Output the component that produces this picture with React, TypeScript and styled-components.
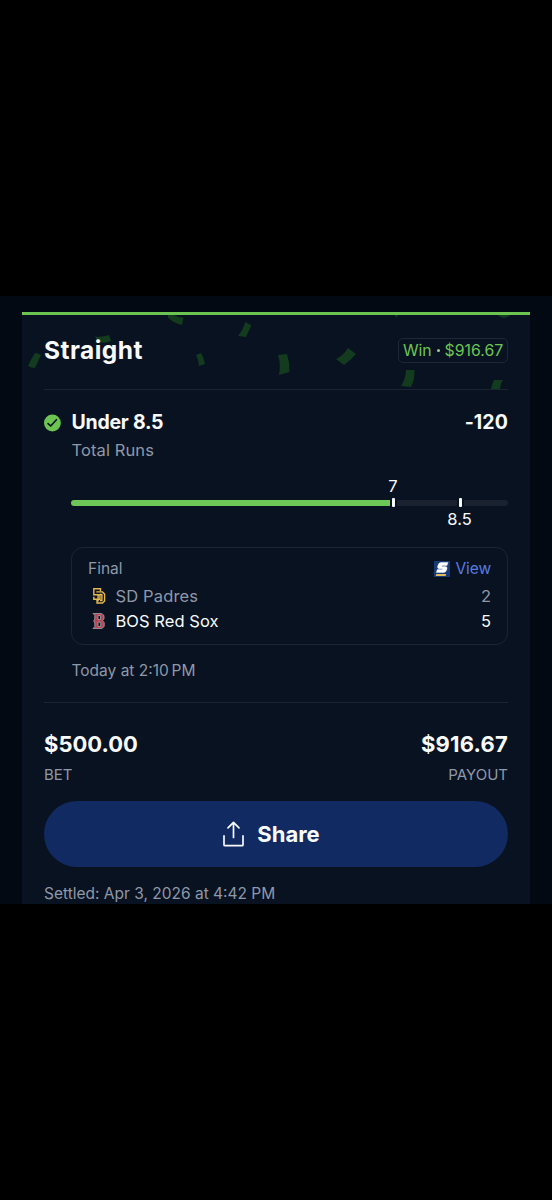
import React from "react";
import styled, { createGlobalStyle } from "styled-components";

const GlobalStyle = createGlobalStyle`
  * { box-sizing: border-box; }
  body {
    margin: 0;
    background: #000;
    color: #f8fafe;
    font-family: Inter, "Liberation Sans", sans-serif;
  }
`;

const Page = styled.main`
  min-height: 1200px;
  padding-top: 296px;
  background: #000;
`;

const Sheet = styled.div`
  height: 608px;
  padding: 16px 22px 0;
  background: #020913;
  overflow: hidden;
`;

const Card = styled.article`
  position: relative;
  height: 592px;
  padding: 0 22px;
  border-top: 3px solid #6cc551;
  background: #091221;
`;

const ConfettiLayer = styled.svg`
  position: absolute;
  top: 0;
  left: 0;
`;

const Header = styled.header`
  position: relative;
  display: flex;
  justify-content: space-between;
  align-items: center;
  height: 75px;
  padding-bottom: 3px;
  border-bottom: 1px solid #1b2432;
`;

const Text = styled.span<{
  $size: number;
  $line: number;
  $weight?: number;
  $color?: string;
  $spacing?: number;
}>`
  display: block;
  margin: 0;
  font-size: ${(p) => p.$size}px;
  line-height: ${(p) => p.$line}px;
  font-weight: ${(p) => p.$weight ?? 400};
  color: ${(p) => p.$color ?? "#f8fafe"};
  letter-spacing: ${(p) => p.$spacing ?? 0}px;
  white-space: nowrap;
`;

const Title = styled(Text)`
  padding-bottom: 2px;
`;

const Badge = styled.div`
  display: flex;
  align-items: center;
  justify-content: center;
  gap: 5px;
  width: 110px;
  height: 25px;
  border: 1px solid #1e2737;
  border-radius: 5px;
`;

const Dot = styled.i`
  width: 3px;
  height: 3px;
  border-radius: 50%;
  background: #a5c8a5;
`;

const Leg = styled.section`
  display: grid;
  grid-template-columns: 27.5px minmax(0, 1fr);
  height: 313px;
  padding-top: 18px;
  border-bottom: 1px solid #1b2432;
`;

const StatusIcon = styled.svg`
  margin-top: 6px;
`;

const Spread = styled.div`
  display: flex;
  justify-content: space-between;
  align-items: center;
`;

const Tracker = styled.div`
  margin: 12px 0 0 -0.5px;
`;

const TrackLabel = styled.div<{ $center: number }>`
  display: flex;
  justify-content: center;
  width: ${(p) => p.$center * 2}px;
`;

const TargetLabel = styled.div`
  display: flex;
  justify-content: center;
  width: 97px;
  margin-left: auto;
`;

const Track = styled.div`
  display: flex;
  align-items: center;
  height: 9px;
  margin: 3px 0 1px;
`;

const Segment = styled.div<{ $width?: number; $fill?: boolean; $radius: string }>`
  width: ${(p) => (p.$width ? `${p.$width}px` : "auto")};
  flex: ${(p) => (p.$width ? "none" : "1")};
  height: 6px;
  background: ${(p) => (p.$fill ? "#6cc756" : "#1a2230")};
  border-radius: ${(p) => p.$radius};
`;

const Tick = styled.div`
  width: 3px;
  height: 9px;
  margin: 0 2px;
  border-radius: 1px;
  background: #f8fafe;
`;

const GameBox = styled.div`
  height: 98px;
  margin: 17px 0 14px -0.5px;
  padding: 9px 16px 0;
  border: 1px solid #1b2432;
  border-radius: 12px;
`;

const ViewLink = styled.a`
  display: flex;
  align-items: center;
  gap: 6px;
`;

const Team = styled.div`
  display: flex;
  align-items: center;
  gap: 8px;
  padding-left: 2.5px;
`;

const TeamRow = styled(Spread)<{ $gap?: number }>`
  height: 25px;
  margin-top: ${(p) => p.$gap ?? 0}px;
`;

const Totals = styled.section`
  padding-top: 26px;
`;

const ShareButton = styled.button`
  display: flex;
  align-items: center;
  justify-content: center;
  gap: 13px;
  width: 100%;
  height: 66px;
  margin: 11px 0 15px;
  padding: 0 9px 0 0;
  border: 0;
  border-radius: 33px;
  background: #112b62;
  font-family: inherit;
`;

const muted = "#8f98a8";
const green = "#6cc551";

const Confetti = () => (
  <ConfettiLayer width="508" height="74" viewBox="22 315 508 74" fill="#133b1e" aria-hidden="true">
    <path d="M168 315H174Q178 317.500 183.500 317.500L182 325Q173 323 168 317.500Z" />
    <path d="M95 336.500Q102 337.500 109 335L111 341Q105 344 98 342Z" />
    <path d="M35 353Q38 353 41 355L35 368Q31 368 28 366Q31 359 35 353Z" />
    <path d="M196 355L201 353Q204 358 205 364L199 366Q199 360 196 355Z" />
    <path d="M245.500 322L251.500 325.500Q248 332 246 337L238 336Q243 330 245.500 322Z" />
    <path d="M278 355L287 354Q290 363 289.500 372L279 375Q281 364 278 355Z" />
    <path d="M348 348L356 354Q350 361 344 365L336 359Q343 356 348 348Z" />
    <path d="M406 370H414.500Q415 379 411 387L401 386Q406 378 406 370Z" />
    <path d="M494 380H503Q500 384 500 389H491Q492 384 494 380Z" />
    <path d="M498 315H510Q504 321 498 315ZM395 315H398L396 318Z" />
  </ConfettiLayer>
);

const Check = () => (
  <StatusIcon width="17" height="18" viewBox="0 0 17 18" aria-hidden="true">
    <circle cx="8.400" cy="9" r="8.400" fill={green} />
    <path d="M4.100 9.600L6.700 12L12.400 5.700" fill="none" stroke="#0a1522" strokeWidth="1.700" strokeLinecap="round" strokeLinejoin="round" />
  </StatusIcon>
);

const PadresLogo = () => (
  <svg width="17" height="18" viewBox="0 0 17 18" fill="none" stroke="#e5b84c" strokeWidth="1.400" aria-hidden="true">
    <path d="M9.500 4.300V1.700H2.800V7.800H9V12.200H2.800V9.800" />
    <path d="M5.300 4.900H11.500L13.600 7V14L11.500 16H6V13.700H7.100V8" />
    <path d="M9 7.500H10.900V13.500H9" />
  </svg>
);

const RedSoxLogo = () => (
  <svg width="17" height="18" viewBox="0 0 17 18" aria-hidden="true">
    <path
      d="M2 1.500H10.500L13 3.500V7L11.500 8.700L13.200 10.500V14.400L10.800 16.500H2L3.800 14.700V11L2.700 9L3.800 7V3.300ZM7 3.500V7.500H9.500V3.500ZM7 10.200V14.500H9.700V10.200Z"
      fill="#b9434e" fillRule="evenodd" stroke="#a6a5ad" strokeWidth=".8"
    />
  </svg>
);

const ScoreLogo = () => (
  <svg width="16" height="16" viewBox="0 0 16 16" aria-hidden="true">
    <rect width="16" height="16" fill="#173b78" />
    <path d="M14 1.500L13 4.500H8L7.600 5.400H11.500Q13.500 5.500 13 7.800Q12.300 11.300 9.800 11.500H2.300L3.300 8.600H8.300L8.600 7.700H5Q3.200 7.500 3.600 5.300Q4.400 1.600 7.100 1.500Z" fill="#fff" stroke="#fff" strokeWidth=".4" />
    <path d="M2.300 13H12.200L11.600 15H1.700Z" fill="#e3bd59" />
  </svg>
);

const ShareIcon = () => (
  <svg width="21" height="26" viewBox="0 0 21 26" fill="none" stroke="#f8fafe" strokeWidth="1.700" strokeLinecap="round" strokeLinejoin="round" aria-hidden="true">
    <path d="M10.500 16.500V1.500M5 6.800L10.500 1.300L16 6.800M1 14.800V23.700Q1 24.700 2 24.700H19Q20 24.700 20 23.700V14.800" />
  </svg>
);

export default function App() {
  return (
    <Page>
      <GlobalStyle />
      <Sheet>
        <Card>
          <Confetti />
          <Header>
            <Title as="h1" $size={24.5} $line={30} $weight={700} $spacing={0.45}>Straight</Title>
            <Badge>
              <Text $size={15.8} $line={20} $color={green}>Win</Text>
              <Dot />
              <Text $size={15.8} $line={20} $color={green}>$916.67</Text>
            </Badge>
          </Header>
          <Leg>
            <Check />
            <div>
              <Spread>
                <Text $size={19.5} $line={28} $weight={700} $spacing={-0.25}>Under 8.5</Text>
                <Text $size={19.5} $line={28} $weight={700} $spacing={0.1}>-120</Text>
              </Spread>
              <Text $size={16.5} $line={29} $color={muted} $spacing={0.1}>Total Runs</Text>
              <Tracker>
                <TrackLabel $center={322}>
                  <Text $size={16.5} $line={18}>7</Text>
                </TrackLabel>
                <Track>
                  <Segment $width={319} $fill $radius="3px 0 0 3px" />
                  <Tick />
                  <Segment $width={59.5} $radius="0" />
                  <Tick />
                  <Segment $radius="0 3px 3px 0" />
                </Track>
                <TargetLabel>
                  <Text $size={16.5} $line={22}>8.5</Text>
                </TargetLabel>
              </Tracker>
              <GameBox>
                <Spread>
                  <Text $size={15.5} $line={24} $color={muted}>Final</Text>
                  <ViewLink>
                    <ScoreLogo />
                    <Text $size={15.5} $line={24} $color="#587be0" $spacing={-0.1}>View</Text>
                  </ViewLink>
                </Spread>
                <TeamRow $gap={2}>
                  <Team>
                    <PadresLogo />
                    <Text $size={16.5} $line={24} $color={muted} $spacing={0.15}>SD Padres</Text>
                  </Team>
                  <Text $size={16.5} $line={24} $color={muted}>2</Text>
                </TeamRow>
                <TeamRow>
                  <Team>
                    <RedSoxLogo />
                    <Text $size={16.5} $line={24} $spacing={0.05}>BOS Red Sox</Text>
                  </Team>
                  <Text $size={16.5} $line={24}>5</Text>
                </TeamRow>
              </GameBox>
              <Text $size={15.5} $line={24} $color={muted}>Today at 2:10{"\u202f"}PM</Text>
            </div>
          </Leg>
          <Totals>
            <Spread>
              <Text $size={22} $line={30} $weight={700}>$500.00</Text>
              <Text $size={22} $line={30} $weight={700} $spacing={0.2}>$916.67</Text>
            </Spread>
            <Spread>
              <Text $size={15} $line={31} $color={muted}>BET</Text>
              <Text $size={15} $line={31} $color={muted}>PAYOUT</Text>
            </Spread>
            <ShareButton>
              <ShareIcon />
              <Text $size={22} $line={30} $weight={700}>Share</Text>
            </ShareButton>
            <Text $size={15.5} $line={24} $color={muted}>Settled: Apr 3, 2026 at 4:42 PM</Text>
          </Totals>
        </Card>
      </Sheet>
    </Page>
  );
}
